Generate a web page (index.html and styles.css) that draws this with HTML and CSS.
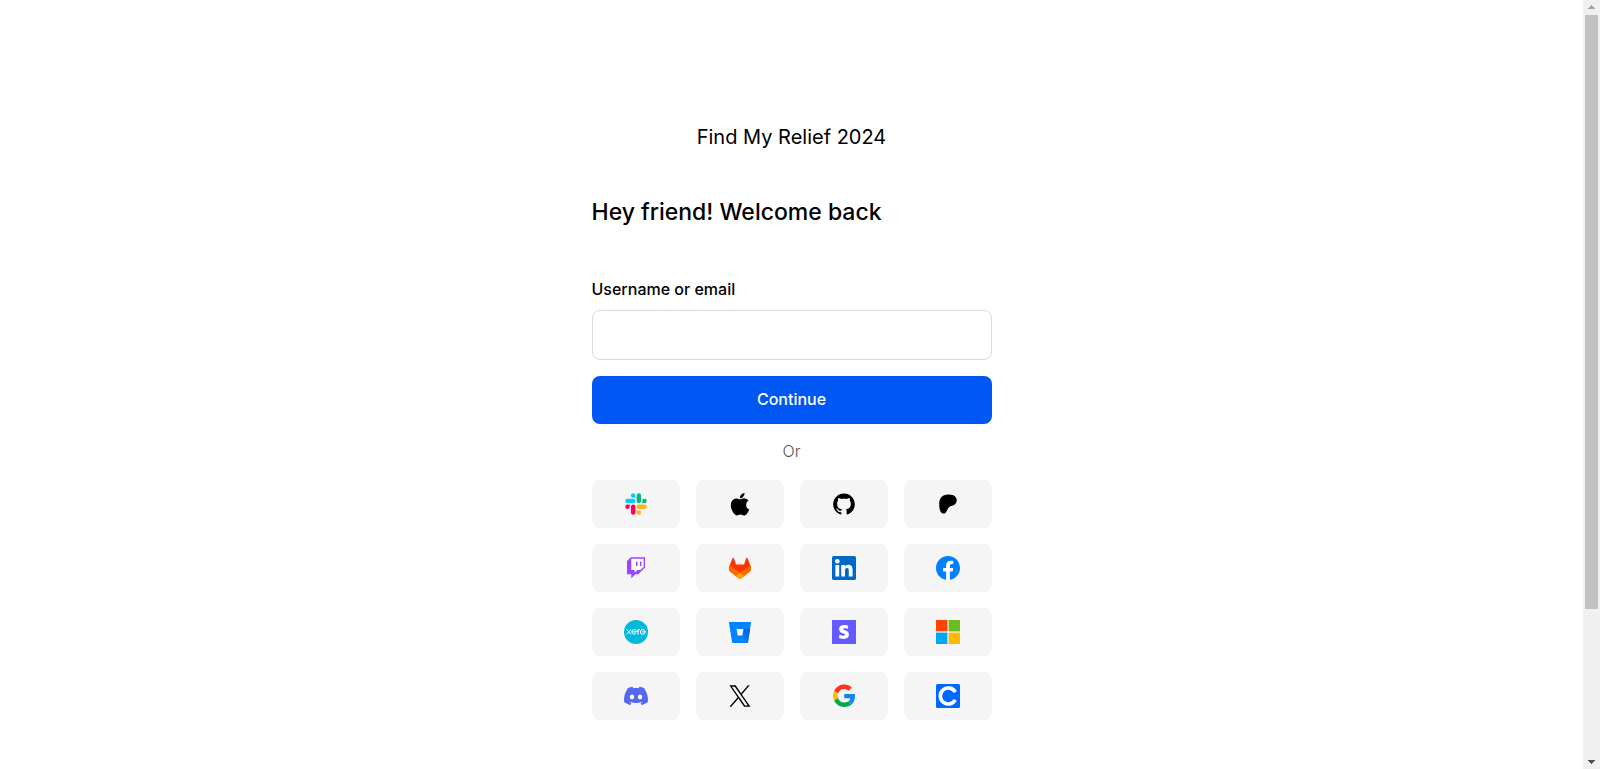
FILE: index.html
```html
<!DOCTYPE html>
<html lang="en">
<head>
<meta charset="utf-8">
<meta name="viewport" content="width=device-width, initial-scale=1">
<title>Find My Relief 2024</title>
<link rel="stylesheet" href="styles.css">
</head>
<body>
<div class="page">
  <main class="content">
    <div class="panel">
      <p class="brand">Find My Relief 2024</p>
      <h1 class="heading">Hey friend! Welcome back</h1>
      <form class="form">
        <div class="field">
          <label class="label" for="identity">Username or email</label>
          <input class="input" id="identity" name="identity" type="text">
        </div>
        <button class="submit" type="submit">Continue</button>
      </form>
      <p class="divider">Or</p>
      <div class="providers">
        <button class="provider" type="button" aria-label="Slack">
          <svg class="icon" viewBox="-1.4 -1.3 26.8 26.8">
            <defs><path id="slack-part" d="M5.042 15.165a2.528 2.528 0 0 1-2.52 2.523A2.528 2.528 0 0 1 0 15.165a2.527 2.527 0 0 1 2.522-2.52h2.52v2.52zM6.313 15.165a2.527 2.527 0 0 1 2.521-2.52 2.527 2.527 0 0 1 2.521 2.52v6.313A2.528 2.528 0 0 1 8.834 24a2.528 2.528 0 0 1-2.521-2.522v-6.313z"/></defs>
            <use href="#slack-part" fill="#ff0052"/>
            <use href="#slack-part" fill="#00cdff" transform="rotate(90 12 12)"/>
            <use href="#slack-part" fill="#00bc83" transform="rotate(180 12 12)"/>
            <use href="#slack-part" fill="#ffb224" transform="rotate(270 12 12)"/>
          </svg>
        </button>
        <button class="provider" type="button" aria-label="Apple">
          <svg class="icon" viewBox="-.8 -1 25.6 25.6"><path d="M12.152 6.896c-.948 0-2.415-1.078-3.96-1.04-2.04.027-3.91 1.183-4.961 3.014-2.117 3.675-.546 9.103 1.519 12.09 1.013 1.454 2.208 3.09 3.792 3.039 1.52-.065 2.09-.987 3.935-.987 1.831 0 2.35.987 3.96.948 1.637-.026 2.676-1.48 3.676-2.948 1.156-1.688 1.636-3.325 1.662-3.415-.039-.013-3.182-1.221-3.22-4.857-.026-3.04 2.48-4.494 2.597-4.559-1.429-2.09-3.623-2.324-4.39-2.376-2-.156-3.675 1.09-4.61 1.09zM15.53 3.83c.843-1.012 1.4-2.427 1.245-3.83-1.207.052-2.662.805-3.532 1.818-.78.896-1.454 2.338-1.273 3.714 1.338.104 2.715-.688 3.559-1.701"/></svg>
        </button>
        <button class="provider" type="button" aria-label="GitHub">
          <svg class="icon" viewBox="-1.3 -1.3 26.6 26.6"><path d="M12 .297c-6.63 0-12 5.373-12 12 0 5.303 3.438 9.8 8.205 11.385.6.113.82-.258.82-.577 0-.285-.01-1.04-.015-2.04-3.338.724-4.042-1.61-4.042-1.61C4.422 18.07 3.633 17.7 3.633 17.7c-1.087-.744.084-.729.084-.729 1.205.084 1.838 1.236 1.838 1.236 1.07 1.835 2.809 1.305 3.495.998.108-.776.417-1.305.76-1.605-2.665-.3-5.466-1.332-5.466-5.93 0-1.31.465-2.38 1.235-3.22-.135-.303-.54-1.523.105-3.176 0 0 1.005-.322 3.3 1.23.96-.267 1.98-.399 3-.405 1.02.006 2.04.138 3 .405 2.28-1.552 3.285-1.23 3.285-1.23.645 1.653.24 2.873.12 3.176.765.84 1.23 1.91 1.23 3.22 0 4.61-2.805 5.625-5.475 5.92.42.36.81 1.096.81 2.22 0 1.606-.015 2.896-.015 3.286 0 .315.21.69.825.57C20.565 22.092 24 17.592 24 12.297c0-6.627-5.373-12-12-12"/></svg>
        </button>
        <button class="provider" type="button" aria-label="Patreon">
          <svg class="icon" viewBox="-3 -3 30 30"><path d="M22.957 7.21c-.004-3.064-2.391-5.576-5.191-6.482-3.478-1.125-8.064-.962-11.384.604C2.357 3.231 1.093 7.391 1.046 11.54c-.039 3.411.302 12.396 5.369 12.46 3.765.047 4.326-4.804 6.068-7.141 1.24-1.662 2.836-2.132 4.801-2.618 3.376-.836 5.678-3.501 5.673-7.031Z"/></svg>
        </button>
        <button class="provider" type="button" aria-label="Twitch">
          <svg class="icon" viewBox="0 0 24 24"><path fill="#9b45ff" d="M6.8 1.200 3 5v13.200h4.300V22.300l4.100-4.100h3L21 11.600V1.200z"/><path fill="#fff" d="m19.600 10.900-3.200 3.200h-3l-2.800 2.700v-2.700H7.300V2.700h12.300z"/><path fill="#9b45ff" d="M16 5.500h1.500v4.500H16zM12 5.500h1.500v4.500H12z"/></svg>
        </button>
        <button class="provider" type="button" aria-label="GitLab">
          <svg class="icon" viewBox="-1.200 -2 27.300 27.300"><path fill="#ff3300" d="M24.507 9.5l-.034-.09L21.082.562a.896.896 0 00-1.694.091l-2.29 7.01H7.825L5.535.653a.898.898 0 00-1.694-.09L.451 9.411.416 9.5a6.297 6.297 0 002.09 7.278l.012.01.03.022 5.16 3.867 2.56 1.935 1.554 1.176a1.051 1.051 0 001.268 0l1.555-1.176 2.56-1.935 5.197-3.89.014-.01A6.297 6.297 0 0024.507 9.5z"/><path fill="#ff6a00" d="M24.507 9.5l-.034-.09a11.44 11.44 0 00-4.56 2.051l-7.447 5.632 4.742 3.584 5.197-3.89.014-.01A6.297 6.297 0 0024.507 9.5z"/><path fill="#ff6a00" d="M5.01 11.461a11.43 11.43 0 00-4.56-2.05L.416 9.5a6.297 6.297 0 002.09 7.278l.012.01.03.022 5.16 3.867 4.745-3.584-7.444-5.632z"/><path fill="#ff9f0a" d="M7.707 20.677l2.56 1.935 1.555 1.176a1.051 1.051 0 001.268 0l1.555-1.176 2.56-1.935-4.743-3.584-4.755 3.584z"/></svg>
        </button>
        <button class="provider" type="button" aria-label="LinkedIn">
          <svg class="icon" viewBox="0 0 24 24"><rect width="24" height="24" rx="1.700" fill="#0068c9"/><g fill="#fff"><circle cx="5.340" cy="5.370" r="2.300"/><path d="M3.400 9h3.800v11.450H3.400zM9.250 9h3.550v1.560h.050c.480-.900 1.640-1.850 3.370-1.850 3.600 0 4.370 2.370 4.370 5.460v6.280h-3.800v-5.570c0-1.330-.030-2.900-1.750-2.900-1.750 0-2.040 1.310-2.040 2.800v5.670H9.250z"/></g></svg>
        </button>
        <button class="provider" type="button" aria-label="Facebook">
          <svg class="icon" viewBox="0 0 24 24"><path fill="#fff" d="M7.200 4.500h10.500v11.200h-3.300V24h-4.800v-8.300H7.200z"/><path fill="#0080ff" d="M24 12.073c0-6.627-5.373-12-12-12s-12 5.373-12 12c0 5.99 4.388 10.954 10.125 11.854v-8.385H7.078v-3.470h3.047V9.430c0-3.007 1.792-4.669 4.533-4.669 1.312 0 2.686.235 2.686.235v2.953H15.830c-1.491 0-1.956.925-1.956 1.874v2.250h3.328l-.532 3.470h-2.796v8.385C19.612 23.027 24 18.062 24 12.073z"/></svg>
        </button>
        <button class="provider" type="button" aria-label="Xero">
          <svg class="icon" viewBox="0 0 24 24"><circle cx="12" cy="12" r="12" fill="#00b7dc"/><g fill="none" stroke="#fff" stroke-width="1" stroke-linecap="round"><path d="m2.700 9.500 4.200 4.700M6.900 9.500 2.700 14.200M7.900 11.900h4.600a2.300 2.300 0 1 0-.800 1.700M14 14.300V9.600M14 11.500c0-1.200.600-1.900 1.600-1.900"/><circle cx="18.700" cy="11.900" r="2.400"/><circle cx="18.700" cy="11.900" r=".300"/></g></svg>
        </button>
        <button class="provider" type="button" aria-label="Bitbucket">
          <svg class="icon" viewBox="0 0 24 24"><defs><linearGradient id="bucket-shade" x1="22" y1="9" x2="12" y2="17" gradientUnits="userSpaceOnUse"><stop offset=".1" stop-color="#005ad6"/><stop offset=".9" stop-color="#0084ff"/></linearGradient></defs><path fill="#0084ff" d="M1.700 2a.7.7 0 0 0-.7.800l3 19.300c.1.500.5.800.9.800h14.400c.4 0 .7-.200.7-.600L23 2.800a.7.7 0 0 0-.7-.800z"/><path fill="url(#bucket-shade)" d="M22 9h-6.600l-1.100 6.500H9.700l-5.400 7.100c.2.200.4.300.6.300h14.400c.4 0 .7-.200.7-.600z"/><path fill="#f5f5f5" d="M8.500 9h7l-1.200 6.500H9.700z"/></svg>
        </button>
        <button class="provider" type="button" aria-label="Stripe">
          <svg class="icon" viewBox="0 0 24 24"><path fill="#635bff" d="M0 0h24v24H0z"/><path fill="#fff" transform="translate(5 5) scale(.58)" d="M13.976 9.150c-2.172-.806-3.356-1.426-3.356-2.409 0-.831.683-1.305 1.901-1.305 2.227 0 4.515.858 6.090 1.631l.890-5.494C18.252.975 15.697 0 12.165 0 9.667 0 7.589.654 6.104 1.872 4.560 3.147 3.757 4.992 3.757 7.218c0 4.039 2.467 5.760 6.476 7.219 2.585.920 3.445 1.574 3.445 2.583 0 .980-.840 1.545-2.354 1.545-1.875 0-4.965-.921-6.990-2.109l-.900 5.555C5.175 22.990 8.385 24 11.714 24c2.641 0 4.843-.624 6.328-1.813 1.664-1.305 2.525-3.236 2.525-5.732 0-4.128-2.524-5.851-6.594-7.305z"/></svg>
        </button>
        <button class="provider" type="button" aria-label="Microsoft">
          <svg class="icon" viewBox="0 0 24 24"><path fill="#ff4500" d="M0 0h11.400v11.400H0z"/><path fill="#6cbc1e" d="M12.600 0H24v11.400H12.600z"/><path fill="#00a8f4" d="M0 12.600h11.400V24H0z"/><path fill="#ffb900" d="M12.600 12.600H24V24H12.600z"/></svg>
        </button>
        <button class="provider" type="button" aria-label="Discord">
          <svg class="icon" viewBox="0 0 24 24"><path fill="#fff" d="M5 9h14v7H5z"/><path fill="#5468f2" d="M20.317 4.370a19.790 19.790 0 00-4.885-1.515.074.074 0 00-.079.037c-.211.375-.445.865-.608 1.250-1.845-.276-3.680-.276-5.487 0-.164-.393-.406-.874-.618-1.250a.077.077 0 00-.079-.037 19.736 19.736 0 00-4.885 1.515.07.07 0 00-.032.028C.533 9.046-.319 13.580.099 18.058a.082.082 0 00.031.056c2.053 1.508 4.041 2.423 5.993 3.029a.078.078 0 00.084-.028c.462-.630.873-1.295 1.226-1.994a.076.076 0 00-.042-.106c-.653-.248-1.274-.550-1.872-.892a.077.077 0 01-.008-.128c.126-.094.252-.192.372-.291a.074.074 0 01.078-.011c3.928 1.793 8.180 1.793 12.061 0a.074.074 0 01.079.010c.120.099.246.198.373.292a.077.077 0 01-.007.128 12.299 12.299 0 01-1.873.891.077.077 0 00-.041.107c.360.698.772 1.363 1.225 1.993a.076.076 0 00.084.029c1.961-.607 3.950-1.522 6.002-3.029a.077.077 0 00.031-.055c.500-5.177-.838-9.674-3.549-13.660a.061.061 0 00-.031-.029zM8.020 15.331c-1.183 0-2.157-1.086-2.157-2.419 0-1.333.956-2.419 2.157-2.419 1.211 0 2.176 1.095 2.157 2.419 0 1.333-.956 2.419-2.157 2.419zm7.975 0c-1.183 0-2.157-1.086-2.157-2.419 0-1.333.955-2.419 2.157-2.419 1.211 0 2.176 1.095 2.157 2.419 0 1.333-.946 2.419-2.157 2.419Z"/></svg>
        </button>
        <button class="provider" type="button" aria-label="X">
          <svg class="icon" viewBox="-80 -75 1370 1370"><path d="M714.163 519.284L1160.890 0H1055.030L667.137 450.887L357.328 0H0L468.492 681.821L0 1226.370H105.866L515.491 750.218L842.672 1226.370H1200L714.137 519.284H714.163ZM569.165 687.828L521.697 619.934L144.011 79.694H306.615L611.412 515.685L658.880 583.579L1055.080 1150.300H892.476L569.165 687.854V687.828Z"/></svg>
        </button>
        <button class="provider" type="button" aria-label="Google">
          <svg class="icon" viewBox="-2 -1 51 51"><path fill="#ff3122" d="M24 9.500c3.540 0 6.710 1.220 9.210 3.600l6.850-6.850C35.900 2.380 30.470 0 24 0 14.620 0 6.510 5.380 2.560 13.220l7.980 6.190C12.430 13.720 17.740 9.500 24 9.500z"/><path fill="#1786eb" d="M46.980 24.550c0-1.570-.150-3.090-.380-4.550H24v9.020h12.940c-.580 2.960-2.260 5.480-4.780 7.180l7.730 6c4.510-4.180 7.090-10.360 7.090-17.650z"/><path fill="#ffbb00" d="M10.530 28.590c-.480-1.450-.760-2.990-.760-4.590s.270-3.140.760-4.590l-7.980-6.190C.920 16.460 0 20.120 0 24c0 3.880.920 7.540 2.560 10.780l7.970-6.190z"/><path fill="#00a850" d="M24 48c6.480 0 11.930-2.130 15.890-5.810l-7.730-6c-2.150 1.450-4.920 2.300-8.160 2.300-6.260 0-11.570-4.220-13.470-9.910l-7.980 6.190C6.510 42.620 14.620 48 24 48z"/></svg>
        </button>
        <button class="provider" type="button" aria-label="Coinbase">
          <svg class="icon" viewBox="0 0 24 24"><rect width="24" height="24" rx="1.500" fill="#0068ff"/><path fill="none" stroke="#fff" stroke-width="3.600" d="M19.300 8.100A8 8 0 1 0 19.300 15.900"/></svg>
        </button>
      </div>
    </div>
  </main>
  <div class="scrollbar" aria-hidden="true">
    <svg class="scroll-arrow" viewBox="0 0 17 15"><path fill="#a3a3a3" d="M8 5h1v1h1v1h1v1h1v1H5V8h1V7h1V6h1z"/></svg>
    <div class="scroll-track"><div class="scroll-thumb"></div></div>
    <svg class="scroll-arrow" viewBox="0 0 17 15"><path fill="#505050" d="M5 6h7v1h-1v1h-1v1H9v1H8V9H7V8H6V7H5z"/></svg>
  </div>
</div>
</body>
</html>
```
FILE: styles.css
```css
*,
*::before,
*::after {
  box-sizing: border-box;
}

body {
  margin: 0;
  background: #fff;
  color: #000;
  font-family: Inter, "Liberation Sans", sans-serif;
  font-size: 16px;
  line-height: 22px;
}

.page {
  display: flex;
  min-height: 100vh;
}

.content {
  flex: 1;
  display: flex;
  justify-content: center;
  padding: 123px 16px 48px;
}

.panel {
  width: 100%;
  max-width: 400px;
}

.brand {
  margin: 0;
  font-size: 20px;
  font-weight: 400;
  line-height: 28px;
  text-align: center;
}

.heading {
  margin: 45px 0 50px;
  font-size: 23px;
  font-weight: 500;
  line-height: 32px;
}

.form {
  display: grid;
  gap: 16px;
}

.field {
  display: grid;
  gap: 10px;
}

.label {
  font-weight: 500;
}

.input {
  width: 100%;
  height: 50px;
  padding: 12px 16px;
  border: 1px solid #dadada;
  border-radius: 8px;
  background: #fff;
  color: inherit;
  font: inherit;
}

.submit {
  height: 48px;
  padding: 0 16px 2px;
  border: 0;
  border-radius: 8px;
  background: #0057f3;
  color: #fff;
  font: inherit;
  font-weight: 500;
  cursor: pointer;
}

.divider {
  margin: 16px 0 18px;
  color: #555;
  font-weight: 300;
  text-align: center;
}

.providers {
  display: grid;
  grid-template-columns: repeat(4, 1fr);
  gap: 16px;
}

.provider {
  display: flex;
  align-items: center;
  justify-content: center;
  height: 48px;
  padding: 0;
  border: 0;
  border-radius: 8px;
  background: #f5f5f5;
  cursor: pointer;
}

.icon {
  display: block;
  width: 24px;
  height: 24px;
}

.scrollbar {
  position: sticky;
  top: 0;
  display: flex;
  flex-direction: column;
  width: 17px;
  height: 100vh;
  background: #f0f0f0;
}

.scroll-arrow {
  display: block;
  width: 17px;
  height: 15px;
}

.scroll-track {
  flex: 1;
  padding: 0 2px;
}

.scroll-thumb {
  height: 80.4%;
  background: #c1c1c1;
}
```
